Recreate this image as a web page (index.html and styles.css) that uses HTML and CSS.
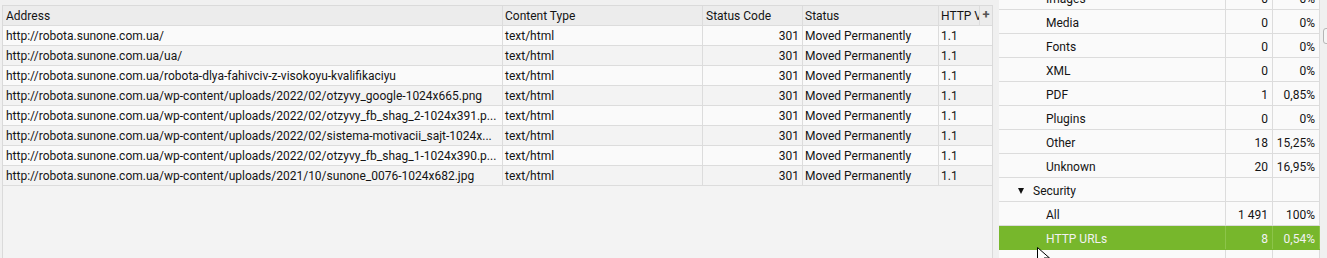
FILE: index.html
```html
<!DOCTYPE html>
<html>
<head>
<meta charset="utf-8">
<link rel="stylesheet" href="styles.css">
</head>
<body>
<div class="app">
  <div class="left">
    <div class="frame">
      <div class="row head">
        <div class="c addr">Address</div>
        <div class="c ctype">Content Type</div>
        <div class="c code">Status Code</div>
        <div class="c status">Status</div>
        <div class="c http">HTTP Version</div>
        <div class="c plus">+</div>
      </div>
      <div class="row odd">
        <div class="c addr">http://robota.sunone.com.ua/</div>
        <div class="c ctype">text/html</div>
        <div class="c code num">301</div>
        <div class="c status">Moved Permanently</div>
        <div class="c httpd">1.1</div>
      </div>
      <div class="row even">
        <div class="c addr">http://robota.sunone.com.ua/ua/</div>
        <div class="c ctype">text/html</div>
        <div class="c code num">301</div>
        <div class="c status">Moved Permanently</div>
        <div class="c httpd">1.1</div>
      </div>
      <div class="row odd">
        <div class="c addr">http://robota.sunone.com.ua/robota-dlya-fahivciv-z-visokoyu-kvalifikaciyu</div>
        <div class="c ctype">text/html</div>
        <div class="c code num">301</div>
        <div class="c status">Moved Permanently</div>
        <div class="c httpd">1.1</div>
      </div>
      <div class="row even">
        <div class="c addr">http://robota.sunone.com.ua/wp-content/uploads/2022/02/otzyvy_google-1024x665.png</div>
        <div class="c ctype">text/html</div>
        <div class="c code num">301</div>
        <div class="c status">Moved Permanently</div>
        <div class="c httpd">1.1</div>
      </div>
      <div class="row odd">
        <div class="c addr">http://robota.sunone.com.ua/wp-content/uploads/2022/02/otzyvy_fb_shag_2-1024x391.p...</div>
        <div class="c ctype">text/html</div>
        <div class="c code num">301</div>
        <div class="c status">Moved Permanently</div>
        <div class="c httpd">1.1</div>
      </div>
      <div class="row even">
        <div class="c addr">http://robota.sunone.com.ua/wp-content/uploads/2022/02/sistema-motivacii_sajt-1024x...</div>
        <div class="c ctype">text/html</div>
        <div class="c code num">301</div>
        <div class="c status">Moved Permanently</div>
        <div class="c httpd">1.1</div>
      </div>
      <div class="row odd">
        <div class="c addr">http://robota.sunone.com.ua/wp-content/uploads/2022/02/otzyvy_fb_shag_1-1024x390.p...</div>
        <div class="c ctype">text/html</div>
        <div class="c code num">301</div>
        <div class="c status">Moved Permanently</div>
        <div class="c httpd">1.1</div>
      </div>
      <div class="row even">
        <div class="c addr">http://robota.sunone.com.ua/wp-content/uploads/2021/10/sunone_0076-1024x682.jpg</div>
        <div class="c ctype">text/html</div>
        <div class="c code num">301</div>
        <div class="c status">Moved Permanently</div>
        <div class="c httpd">1.1</div>
      </div>
    </div>
  </div>
  <div class="gap"></div>
  <div class="right">
    <div class="tree">
      <div class="trow"><div class="lab sub">Images</div><div class="cnt">0</div><div class="pct">0%</div></div>
      <div class="trow"><div class="lab sub">Media</div><div class="cnt">0</div><div class="pct">0%</div></div>
      <div class="trow"><div class="lab sub">Fonts</div><div class="cnt">0</div><div class="pct">0%</div></div>
      <div class="trow"><div class="lab sub">XML</div><div class="cnt">0</div><div class="pct">0%</div></div>
      <div class="trow"><div class="lab sub">PDF</div><div class="cnt">1</div><div class="pct">0,85%</div></div>
      <div class="trow"><div class="lab sub">Plugins</div><div class="cnt">0</div><div class="pct">0%</div></div>
      <div class="trow"><div class="lab sub">Other</div><div class="cnt">18</div><div class="pct">15,25%</div></div>
      <div class="trow"><div class="lab sub">Unknown</div><div class="cnt">20</div><div class="pct">16,95%</div></div>
      <div class="trow"><div class="lab group"><span class="tri"></span>Security</div><div class="cnt"></div><div class="pct"></div></div>
      <div class="trow"><div class="lab sub">All</div><div class="cnt">1 491</div><div class="pct">100%</div></div>
      <div class="trow sel"><div class="lab sub">HTTP URLs</div><div class="cnt">8</div><div class="pct">0,54%</div></div>
      <div class="trow"><div class="lab sub"></div><div class="cnt"></div><div class="pct"></div></div>
    </div>
    <svg class="cursor" width="14" height="14" viewBox="0 0 14 14">
      <path d="M0.5 0.5 L0.5 16 L4.5 12 L7.5 18 L10 17 L7 11 L12.5 11 Z" fill="#fff" stroke="#000" stroke-width="1"/>
    </svg>
  </div>
  <div class="scroll"><div class="thumb"></div></div>
</div>
</body>
</html>
```

FILE: styles.css
```css
* { box-sizing: border-box; }
html, body { margin: 0; padding: 0; }
body {
  width: 1327px;
  height: 258px;
  overflow: hidden;
  background: #f0f0f0;
  font-family: Roboto, "Liberation Sans", sans-serif;
  font-size: 12px;
  color: #141414;
}
.app {
  display: flex;
  height: 258px;
}
.left {
  width: 993px;
  padding: 5px 0 0 2px;
  background: #f0f0f0;
}
.frame {
  height: 253px;
  border-left: 1px solid #dadada;
  border-right: 1px solid #dadada;
  border-top: 1px solid #dadada;
  background: #f3f3f3;
}
.row {
  display: flex;
  height: 20px;
  border-bottom: 1px solid #dcdcdc;
}
.row.head { background: #ececec; }
.row.odd { background: #fafafa; }
.row.even { background: #f3f3f3; }
.c {
  height: 19px;
  line-height: 21px;
  padding: 0 3px;
  white-space: nowrap;
  overflow: hidden;
  border-right: 1px solid #dcdcdc;
  flex: none;
}
.head .c { line-height: 20px; }
.addr { width: 500px; }
.ctype { width: 200px; padding-left: 2px; }
.code { width: 100px; }
.num { text-align: right; padding-right: 3px; }
.status { width: 136px; padding-left: 2px; }
.http { width: 41px; padding-left: 2px; }
.httpd { width: 54px; padding-left: 2px; border-right: none; }
.head .plus {
  width: 12px;
  border-right: none;
  padding: 0;
  text-align: center;
  font-weight: bold;
  color: #555;
  font-size: 13px;
  line-height: 18px;
}
.gap {
  width: 6px;
  background: #f0f0f0;
}
.right {
  position: relative;
  width: 321px;
  overflow: hidden;
  background: #f3f3f3;
}
.tree {
  margin-top: -14px;
}
.trow {
  display: flex;
  height: 24px;
  border-bottom: 1px solid #dcdcdc;
  background: #fafafa;
}
.trow > div {
  height: 23px;
  line-height: 26px;
  white-space: nowrap;
  border-right: 1px solid #dcdcdc;
  flex: none;
}
.lab { width: 227px; }
.lab.sub { padding-left: 47px; }
.lab.group { padding-left: 19px; }
.tri {
  display: inline-block;
  width: 0;
  height: 0;
  border-left: 3.5px solid transparent;
  border-right: 3.5px solid transparent;
  border-top: 6px solid #111;
  margin-right: 9px;
  vertical-align: 1px;
}
.cnt { width: 47px; text-align: right; padding-right: 4px; }
.pct { width: 47px; text-align: right; padding-right: 4px; }
.trow.sel { background: #77b72c; color: #f2f2f2; border-bottom-color: #77b72c; }
.trow.sel > div { border-right-color: #8cc44a; }
.cursor {
  position: absolute;
  left: 38px;
  top: 247px;
  width: 14px;
  height: 14px;
  overflow: visible;
}
.scroll {
  flex: 1;
  position: relative;
  background: #f0f0f0;
}
.thumb {
  position: absolute;
  left: 3px;
  top: 28px;
  width: 10px;
  height: 16px;
  border: 1px solid #b5b5b5;
  border-radius: 3px;
  background: #f6f6f6;
}
```
